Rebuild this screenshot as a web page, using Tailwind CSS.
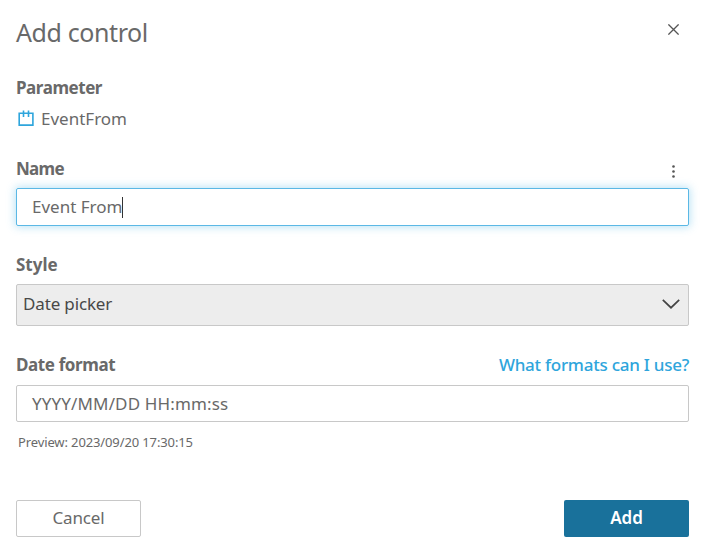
<!DOCTYPE html>
<html lang="en">
<head>
<meta charset="utf-8">
<title>Add control</title>
<script src="https://cdn.jsdelivr.net/npm/@tailwindcss/browser@4"></script>
</head>
<body class="bg-white font-['Noto_Sans','Open_Sans',sans-serif] text-[17px] text-[#696969]">
<main class="ml-4 flex h-[555px] w-[673px] flex-col overflow-visible">
  <header class="flex h-[76px] items-start justify-between pt-[15px]">
    <h1 class="text-[25px] leading-[34px] tracking-[-0.4px] whitespace-nowrap"><span>Add control</span></h1>
    <button class="mt-[9px] mr-[10px]" aria-label="Close">
      <svg class="block" width="11" height="11" viewBox="0 0 11 11" fill="none" stroke="#555" stroke-width="1.3"><path d="M.4.4 10.6 10.6M10.6.4.4 10.6"/></svg>
    </button>
  </header>
  <section class="h-[81px]">
    <h2 class="h-6 leading-6 font-bold tracking-[-0.45px]"><span>Parameter</span></h2>
    <div class="mt-[7px] flex h-6 items-center pl-[2px] leading-6">
      <svg class="-mt-[2px] mr-[7px] block" width="16" height="16" viewBox="0 0 16 16" fill="none" stroke="#2ea5dc" stroke-width="1.6"><path d="M1.2 3.3h13.7v11.8H1.2zM5.5.6v6.4M10.5.6v6.4"/></svg>
      <span>EventFrom</span>
    </div>
  </section>
  <section class="h-[96px]">
    <div class="flex h-[31px] items-start justify-between">
      <h2 class="leading-6 font-bold tracking-[-0.7px]"><span>Name</span></h2>
      <svg class="mt-2 mr-[14px] block" width="3" height="13" viewBox="0 0 3 13" fill="#555"><circle cx="1.5" cy="1.5" r="1.3"/><circle cx="1.5" cy="6.5" r="1.3"/><circle cx="1.5" cy="11.5" r="1.3"/></svg>
    </div>
    <div class="flex h-[38px] items-center rounded-[2px] border border-[#5bb8e5] pl-[15px] shadow-[0_0_9px_1px_rgba(70,180,230,0.38)]">
      <span>Event From</span><i class="block h-[21px] w-px bg-[#333]"></i>
    </div>
  </section>
  <section class="h-[100px]">
    <h2 class="h-[31px] leading-6 font-bold"><span>Style</span></h2>
    <div class="flex h-[42px] items-center justify-between rounded-[2px] border border-[#c8c8c8] bg-[#ededed] pr-2 pl-[6px] text-[#484848]">
      <span class="-mt-[2px] tracking-[-0.15px]">Date picker</span>
      <svg class="-mt-[3px] block" width="18" height="10" viewBox="0 0 18 10" fill="none" stroke="#444" stroke-width="1.7"><path d="M.8.8 9 8.7 17.2.8"/></svg>
    </div>
  </section>
  <section class="h-[147px]">
    <div class="flex h-8 items-start justify-between leading-6">
      <h2 class="font-bold tracking-[-0.38px]"><span>Date format</span></h2>
      <a class="font-medium tracking-[-0.25px] text-[#2ea5dc]"><span>What formats can I use?</span></a>
    </div>
    <div class="flex h-[37px] items-center rounded-[2px] border border-[#c8c8c8] pl-[15px] tracking-[0.14px]"><span>YYYY/MM/DD HH:mm:ss</span></div>
    <p class="mt-[10px] pl-[2px] text-[13px] leading-5 tracking-[-0.12px]"><span>Preview: 2023/09/20 17:30:15</span></p>
  </section>
  <footer class="flex justify-between">
    <button class="flex h-[37px] w-[125px] items-center justify-center rounded-[2px] border border-[#c8c8c8] pb-[2px] tracking-[-0.15px]"><span>Cancel</span></button>
    <button class="flex h-[37px] w-[125px] items-center justify-center rounded-[2px] bg-[#19719b] pb-[2px] font-semibold text-white"><span>Add</span></button>
  </footer>
</main>
</body>
</html>
